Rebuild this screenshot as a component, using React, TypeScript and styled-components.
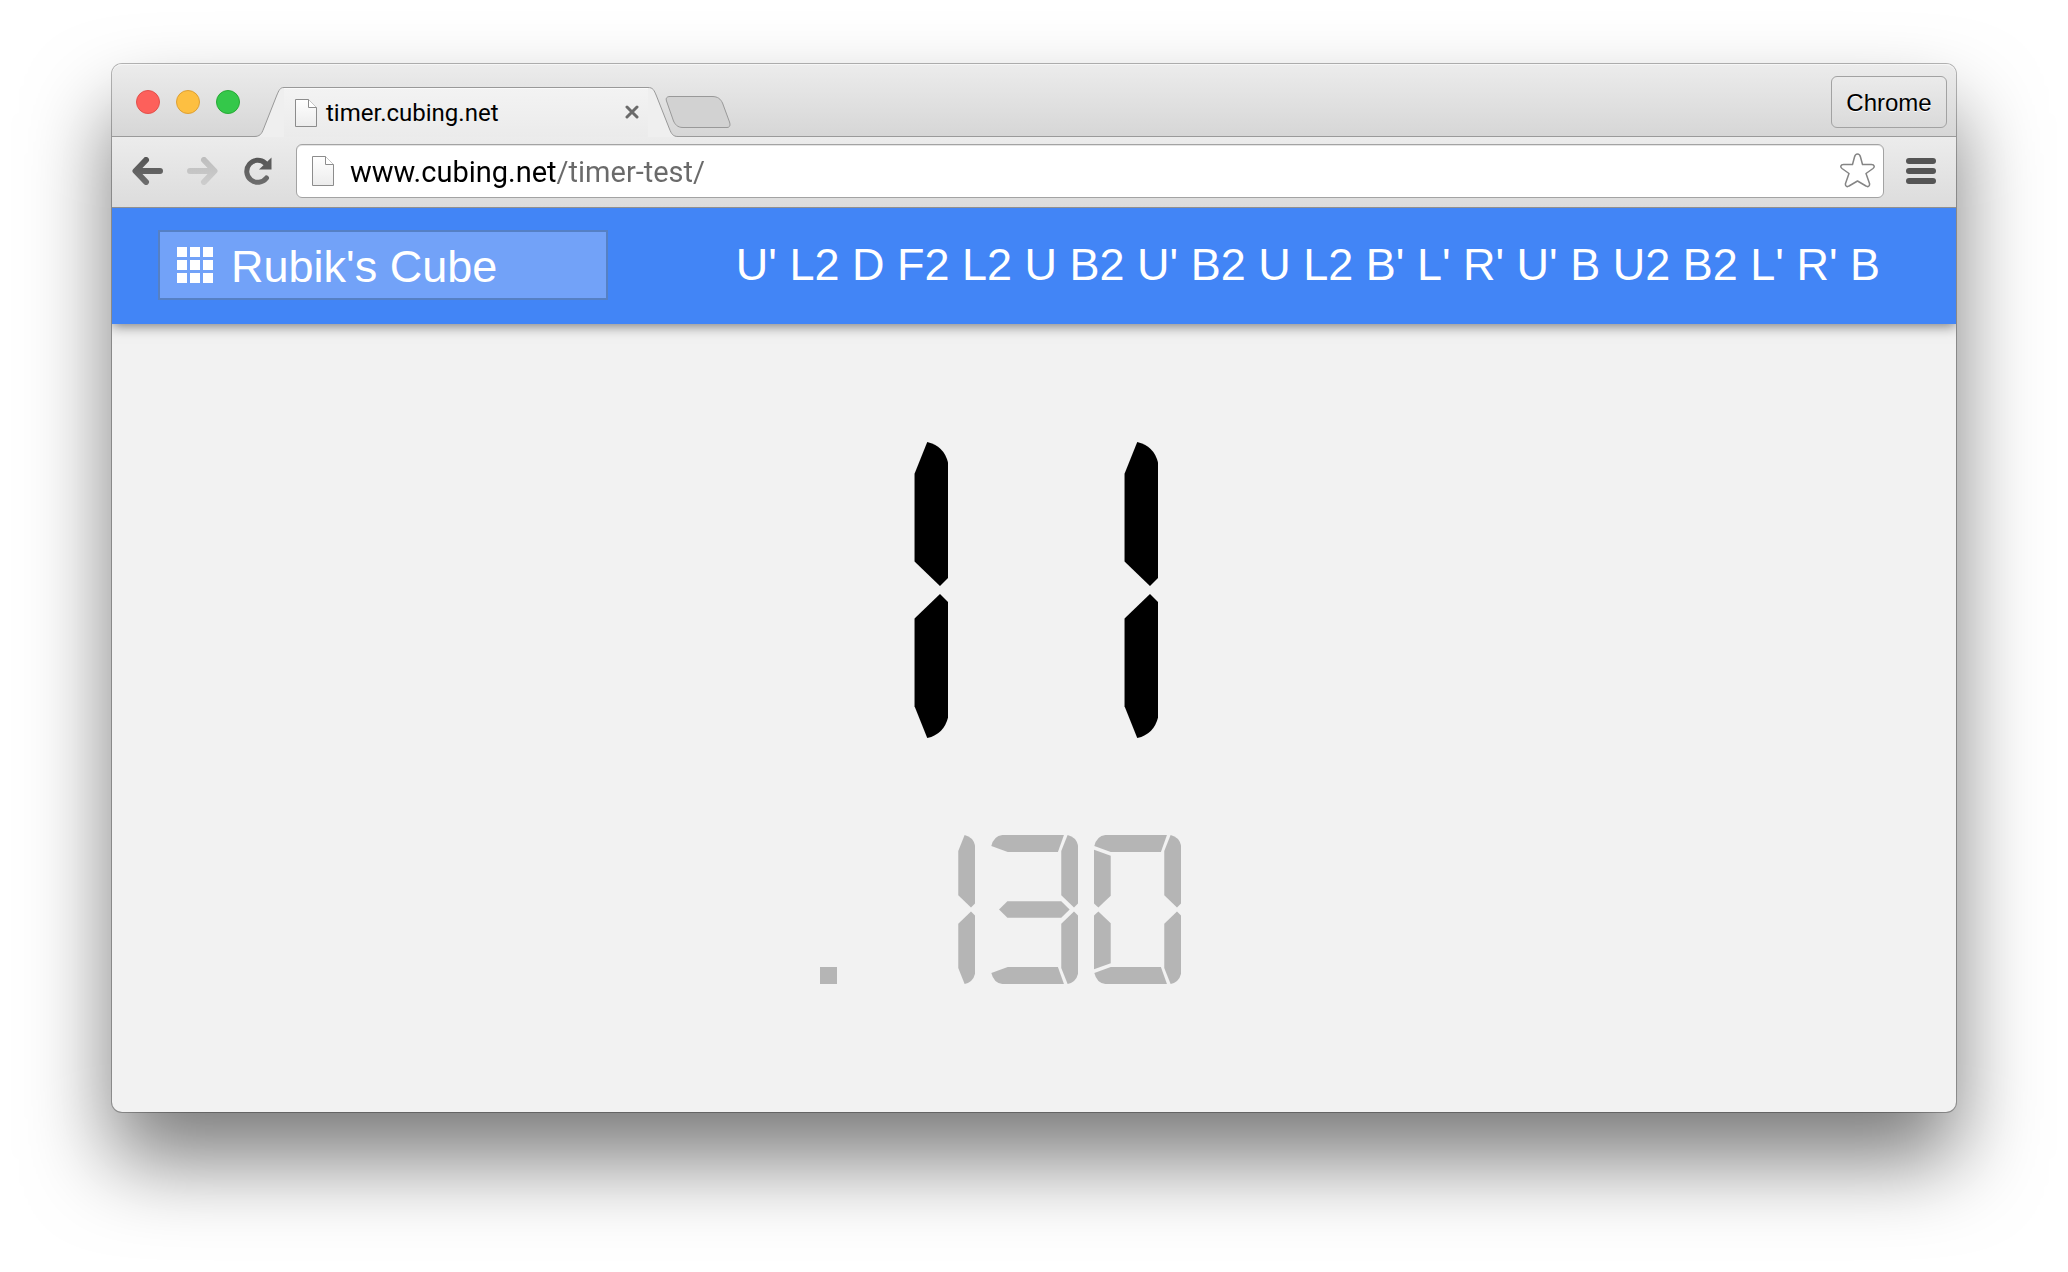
import React from "react";
import styled, { createGlobalStyle } from "styled-components";

const GlobalStyle = createGlobalStyle`
  *, *::before, *::after { box-sizing: border-box; }
  body { margin: 0; background: #fff; }
  button, input, select { font: inherit; color: inherit; margin: 0; }
`;

const uiFont = `Roboto, "Noto Sans", sans-serif`;
const pageFont = `"Liberation Sans", Arial, sans-serif`;

const Desktop = styled.div`
  display: flex;
  min-height: 100vh;
  padding: 64px 112px 160px;
`;

const BrowserWindow = styled.div`
  flex: 1;
  min-width: 0;
  display: flex;
  flex-direction: column;
  border-radius: 10px;
  background: #f2f2f2;
  box-shadow: 0 0 0 1px rgba(0, 0, 0, 0.28), 0 48px 84px rgba(0, 0, 0, 0.52);
`;

const TitleBar = styled.header`
  display: flex;
  align-items: flex-end;
  height: 73px;
  padding: 0 9px 0 24px;
  border-radius: 10px 10px 0 0;
  background: linear-gradient(#ececec, #d6d6d6);
  box-shadow: inset 0 1px #f6f6f6, inset 0 -1px #9a9a9a;
`;

const TrafficLights = styled.div`
  display: flex;
  gap: 16px;
  margin: 0 14px 23px 0;
`;

const Light = styled.button<{ $fill: string; $edge: string }>`
  width: 24px;
  height: 24px;
  padding: 0;
  border: 1px solid ${(p) => p.$edge};
  border-radius: 50%;
  background: ${(p) => p.$fill};
`;

const Tab = styled.div`
  display: flex;
  height: 50px;
`;

const TabEdge = styled.svg`
  display: block;
  width: 30px;
  height: 50px;
`;

const TabBody = styled.div`
  display: flex;
  align-items: center;
  width: 364px;
  padding: 0 8px 0 11px;
  border-top: 1px solid #999;
  background: linear-gradient(#f3f3f3, #ebebeb);
  box-shadow: inset 0 1px #fafafa;
`;

const TabTitle = styled.span`
  flex: 1;
  margin-left: 9px;
  font: 24px/28px ${uiFont};
  color: #000;
`;

const IconButton = styled.button`
  display: block;
  padding: 0;
  border: 0;
  background: none;

  svg { display: block; }
`;

const NewTab = styled(IconButton)`
  margin: 0 auto 8px -13px;
`;

const ProfileButton = styled.button`
  width: 116px;
  height: 52px;
  margin-bottom: 9px;
  padding: 2px 0 0;
  border: 1px solid #a2a2a2;
  border-radius: 6px;
  background: linear-gradient(#ebebeb, #dadada);
  font: 24px/28px ${pageFont};
  color: #000;
  text-shadow: 0 1px #fff;
`;

const Toolbar = styled.nav`
  display: flex;
  align-items: center;
  height: 71px;
  padding: 0 20px 2px;
  border-bottom: 1px solid #909090;
  background: linear-gradient(#ececec, #dcdcdc);
`;

const NavButtons = styled.div`
  display: flex;
  align-items: center;
  gap: 24px;
  margin-right: 22px;
`;

const AddressBar = styled.div`
  flex: 1;
  display: flex;
  align-items: center;
  height: 54px;
  margin-right: 22px;
  padding: 0 8px 0 15px;
  border: 1px solid #a3a3a3;
  border-radius: 6px;
  background: #fff;
  box-shadow: inset 0 1px #e4e4e4;
`;

const AddressInput = styled.input`
  flex: 1;
  min-width: 0;
  padding: 2px 0 0;
  margin: 0 16px;
  border: 0;
  outline: 0;
  font: 29px/40px ${uiFont};
  color: transparent;
  background: linear-gradient(to right, #000 206px, #6a6a6a 206px);
  -webkit-background-clip: text;
  background-clip: text;
`;

const AppBar = styled.div`
  position: relative;
  display: flex;
  align-items: center;
  justify-content: space-between;
  height: 116px;
  padding: 0 76px 2px 46px;
  background: #4285f6;
  color: #fff;
  font: 45px/56px ${pageFont};
  box-shadow: 0 2px 12px rgba(0, 0, 0, 0.5);
  clip-path: inset(0 0 -24px 0);
`;

const PuzzlePicker = styled.label`
  display: flex;
  align-items: center;
  width: 450px;
  height: 70px;
  padding-left: 17px;
  border: 2px solid #5580c4;
  background: #72a2f8;
`;

const PuzzleSelect = styled.select`
  flex: 1;
  appearance: none;
  height: 66px;
  padding: 4px 0 0 18px;
  border: 0;
  outline: 0;
  background: none;
`;

const Scramble = styled.div`
  white-space: nowrap;
`;

const Timer = styled.main`
  flex: 1;
  display: flex;
  flex-direction: column;
  align-items: center;
  padding: 118px 0;
`;

const Seconds = styled.div`
  display: flex;
  gap: 36px;
  margin-bottom: 97px;
  padding-right: 136px;
  color: #000;
`;

const Fraction = styled.div`
  display: flex;
  align-items: flex-end;
  gap: 16px;
  padding-right: 68px;
  color: #b5b5b5;
`;

const Digit = styled.svg<{ $large?: boolean }>`
  display: block;
  width: ${(p) => (p.$large ? 174 : 87)}px;
  height: ${(p) => (p.$large ? 296 : 149)}px;
  fill: currentColor;
`;

const DecimalPoint = styled.span`
  width: 17px;
  height: 17px;
  margin-right: 35px;
  background: currentColor;
`;

/* Seven-segment display: a–g run clockwise from the top, g is the middle bar. */
const SEGMENTS: Record<string, string> = {
  a: "M1 33Q8 3 34 0H218L200 51H50Z",
  b: "M229 0Q254 6 260 31V205L248 217L210 180V48Z",
  c: "M229 446Q254 440 260 415V241L248 229L210 266V398Z",
  d: "M1 413Q8 443 34 446H218L200 395H50Z",
  e: "M0 402L50 384V264L13 229L0 241Z",
  f: "M0 44L50 62V182L13 217L0 205Z",
  g: "M24 223L49 198H210L235 223L210 248H49Z",
};

const LIT: Record<string, string> = {
  "0": "abcdef",
  "1": "bc",
  "3": "abcdg",
};

function SegmentDigit({ value, large }: { value: string; large?: boolean }) {
  return (
    <Digit $large={large} viewBox="0 0 260 446" preserveAspectRatio="none" aria-hidden="true">
      {LIT[value].split("").map((s) => (
        <path key={s} d={SEGMENTS[s]} />
      ))}
    </Digit>
  );
}

function PageIcon({ height }: { height: number }) {
  const h = height - 0.5;
  return (
    <svg width="22" height={height} viewBox={`0 0 22 ${height}`} aria-hidden="true">
      <defs>
        <linearGradient id="sheet" x1="0" y1="0" x2="0" y2="1">
          <stop offset="0" stopColor="#fff" />
          <stop offset="1" stopColor="#ececec" />
        </linearGradient>
      </defs>
      <path d={`M.5 .5H13.5L21.5 8.5V${h}H.5Z`} fill="url(#sheet)" stroke="#8c8c8c" />
      <path d="M13.5 .5V8.5H21.5" fill="#fff" stroke="#8c8c8c" />
    </svg>
  );
}

function Arrow({ flip, from, to }: { flip?: boolean; from: string; to: string }) {
  const id = flip ? "arrow-forward" : "arrow-back";
  return (
    <svg width="31" height="28" viewBox="0 0 31 28" aria-hidden="true">
      <defs>
        <linearGradient id={id} gradientUnits="userSpaceOnUse" x1="0" y1="0" x2="0" y2="28">
          <stop offset="0" stopColor={from} />
          <stop offset="1" stopColor={to} />
        </linearGradient>
      </defs>
      <path
        d="M14 3L3.500 14L14 25M4 14H28"
        transform={flip ? "translate(31 0) scale(-1 1)" : undefined}
        fill="none"
        stroke={`url(#${id})`}
        strokeWidth="6"
        strokeLinecap="round"
        strokeLinejoin="round"
      />
    </svg>
  );
}

export default function App() {
  return (
    <>
      <GlobalStyle />
      <Desktop>
        <BrowserWindow>
          <TitleBar>
            <TrafficLights>
              <Light $fill="#fd605b" $edge="#e2504b" aria-label="Close window" />
              <Light $fill="#fdbf41" $edge="#dea034" aria-label="Minimize window" />
              <Light $fill="#34c84a" $edge="#27aa35" aria-label="Zoom window" />
            </TrafficLights>
            <Tab>
              <TabEdge viewBox="0 0 30 50" aria-hidden="true">
                <path d="M0 50V49.500C6 49.500 7.500 47 9.500 42L22.500 9C25 3 26 .5 30 .5V50Z" fill="#efefef" />
                <path d="M0 49.500C6 49.500 7.500 47 9.500 42L22.500 9C25 3 26 .5 30 .5" fill="none" stroke="#999" />
              </TabEdge>
              <TabBody>
                <PageIcon height={28} />
                <TabTitle>timer.cubing.net</TabTitle>
                <IconButton aria-label="Close tab">
                  <svg width="16" height="16" viewBox="0 0 16 16" aria-hidden="true">
                    <path d="M3 2L13 12M13 2L3 12" stroke="#6a6a6a" strokeWidth="3" strokeLinecap="round" />
                  </svg>
                </IconButton>
              </TabBody>
              <TabEdge viewBox="0 0 30 50" aria-hidden="true">
                <path d="M30 50V49.500C25 49.500 23.500 47 21.500 42L8.500 9C6 3 5 .5 0 .5V50Z" fill="#efefef" />
                <path d="M30 49.500C25 49.500 23.500 47 21.500 42L8.500 9C6 3 5 .5 0 .5" fill="none" stroke="#999" />
              </TabEdge>
            </Tab>
            <NewTab aria-label="New tab">
              <svg width="66" height="34" viewBox="0 0 66 34" aria-hidden="true">
                <path
                  d="M5 1.500H47C53 1.500 55.500 4 57.500 8L64.500 27C65.500 30 65 32.500 62 32.500H18C12 32.500 10 29 8.500 26L1.500 6C.5 3 2 1.500 5 1.500Z"
                  fill="#d2d2d2"
                  stroke="#999"
                />
              </svg>
            </NewTab>
            <ProfileButton>Chrome</ProfileButton>
          </TitleBar>

          <Toolbar>
            <NavButtons>
              <IconButton aria-label="Back"><Arrow from="#555" to="#6e6e6e" /></IconButton>
              <IconButton aria-label="Forward"><Arrow flip from="#bdbdbd" to="#cdcdcd" /></IconButton>
              <IconButton aria-label="Reload">
                <svg width="32" height="28" viewBox="0 0 32 28" aria-hidden="true">
                  <defs>
                    <linearGradient id="reload" gradientUnits="userSpaceOnUse" x1="0" y1="0" x2="0" y2="28">
                      <stop offset="0" stopColor="#555" />
                      <stop offset="1" stopColor="#6e6e6e" />
                    </linearGradient>
                  </defs>
                  <path
                    d="M24.500 21A11 11 0 1 1 23 6"
                    fill="none"
                    stroke="url(#reload)"
                    strokeWidth="5"
                    strokeLinecap="round"
                  />
                  <path d="M29.500 .5V12.500H17Z" fill="#5c5c5c" />
                </svg>
              </IconButton>
            </NavButtons>
            <AddressBar>
              <PageIcon height={30} />
              <AddressInput aria-label="Address" defaultValue="www.cubing.net/timer-test/" />
              <IconButton aria-label="Bookmark this page">
                <svg width="35" height="36" viewBox="0 0 35 36" aria-hidden="true">
                  <path
                    d="M17.500 1C19.500 1 20 2 20.500 4L22.500 11.500H31.500C34.500 11.500 35 14 33 15.500L26 20.500L29.500 30.500C30 33 28 34.500 26 33L17.500 28L9 33C7 34.500 5 33 5.500 30.500L9 20.500L2 15.500C0 14 .5 11.500 3.500 11.500H12.500L14.500 4C15 2 15.500 1 17.500 1Z"
                    fill="#fff"
                    stroke="#858585"
                    strokeWidth="1.500"
                    strokeLinejoin="round"
                  />
                </svg>
              </IconButton>
            </AddressBar>
            <IconButton aria-label="Menu">
              <svg width="30" height="26" viewBox="0 0 30 26" fill="#555" aria-hidden="true">
                <rect width="30" height="6" rx="3" />
                <rect y="10" width="30" height="6" rx="3" />
                <rect y="20" width="30" height="6" rx="3" />
              </svg>
            </IconButton>
          </Toolbar>

          <AppBar>
            <PuzzlePicker>
              <svg width="36" height="36" viewBox="0 0 36 36" fill="#fff" aria-hidden="true">
                {[0, 13, 26].map((y) =>
                  [0, 13, 26].map((x) => <rect key={`${x}-${y}`} x={x} y={y} width="10" height="10" />)
                )}
              </svg>
              <PuzzleSelect aria-label="Puzzle">
                <option>Rubik's Cube</option>
              </PuzzleSelect>
            </PuzzlePicker>
            <Scramble>U' L2 D F2 L2 U B2 U' B2 U L2 B' L' R' U' B U2 B2 L' R' B</Scramble>
          </AppBar>

          <Timer>
            <Seconds role="img" aria-label="11">
              <SegmentDigit value="1" large />
              <SegmentDigit value="1" large />
            </Seconds>
            <Fraction role="img" aria-label=".130">
              <DecimalPoint />
              <SegmentDigit value="1" />
              <SegmentDigit value="3" />
              <SegmentDigit value="0" />
            </Fraction>
          </Timer>
        </BrowserWindow>
      </Desktop>
    </>
  );
}
